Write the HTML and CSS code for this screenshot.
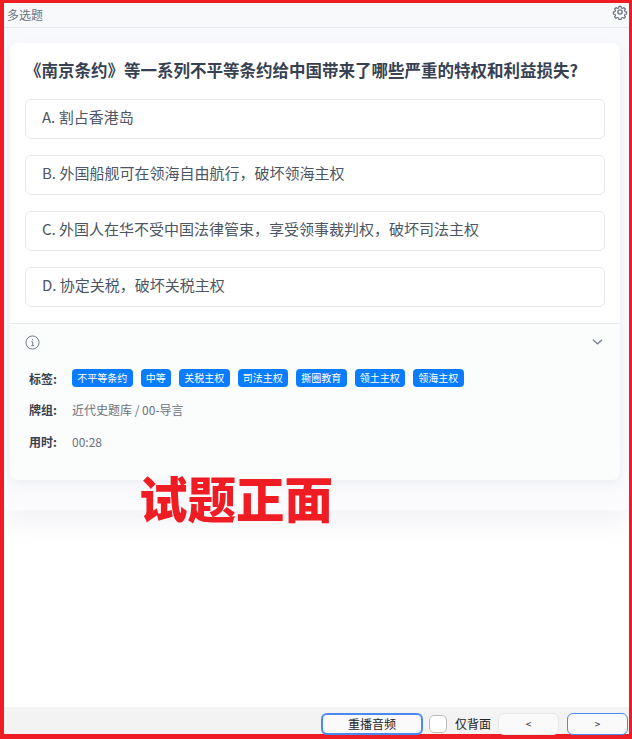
FILE: index.html
```html
<!DOCTYPE html>
<html lang="zh-CN">
<head>
   <meta charset="UTF-8">
   <title>多选题</title>
   <link rel="stylesheet" href="styles.css">
</head>
<body>
   <div class="frame">
      <header class="top-bar">
         <span class="top-title">多选题</span>
         <svg class="gear" viewBox="0 0 24 24" fill="none" stroke="#6b7280" stroke-width="2" stroke-linejoin="round">
            <path d="M10.3 2.6h3.4l.6 2.7 1.9.8 2.4-1.5 2.4 2.4-1.5 2.4.8 1.9 2.7.6v3.4l-2.7.6-.8 1.9 1.5 2.4-2.4 2.4-2.4-1.5-1.9.8-.6 2.7h-3.4l-.6-2.7-1.9-.8-2.4 1.5-2.4-2.4 1.5-2.4-.8-1.9-2.7-.6v-3.4l2.7-.6.8-1.9-1.5-2.4 2.4-2.4 2.4 1.5 1.9-.8z" transform="translate(1.2 1.2) scale(.9)"/>
            <circle cx="12" cy="12" r="3.2"/>
         </svg>
      </header>

      <main class="content">
         <div class="back-card">
            <section class="card">
               <div class="question">
                  <h2>《南京条约》等一系列不平等条约给中国带来了哪些严重的特权和利益损失?</h2>
                  <div class="option">A. 割占香港岛</div>
                  <div class="option">B. 外国船舰可在领海自由航行，破坏领海主权</div>
                  <div class="option">C. 外国人在华不受中国法律管束，享受领事裁判权，破坏司法主权</div>
                  <div class="option">D. 协定关税，破坏关税主权</div>
               </div>
               <div class="info">
                  <div class="info-head">
                     <svg class="info-icon" viewBox="0 0 16 16" fill="none" stroke="#6b7280">
                        <circle cx="8" cy="8" r="7"/>
                        <path d="M6.8 7.2h1.4v4M6.6 11.4h3.2M8 4.4v1.2"/>
                     </svg>
                     <svg class="chevron" viewBox="0 0 12 8" fill="none" stroke="#7b8494" stroke-width="1.5">
                        <path d="M1 1.5l5 4.5 5-4.5"/>
                     </svg>
                  </div>
                  <div class="info-row tags-row">
                     <span class="info-label">标签:</span>
                     <div class="tags">
                        <span class="tag">不平等条约</span>
                        <span class="tag">中等</span>
                        <span class="tag">关税主权</span>
                        <span class="tag">司法主权</span>
                        <span class="tag">撕圈教育</span>
                        <span class="tag">领土主权</span>
                        <span class="tag">领海主权</span>
                     </div>
                  </div>
                  <div class="info-row">
                     <span class="info-label">牌组:</span>
                     <span class="info-value">近代史题库 / 00-导言</span>
                  </div>
                  <div class="info-row">
                     <span class="info-label">用时:</span>
                     <span class="info-value">00:28</span>
                  </div>
               </div>
            </section>
         </div>
         <div class="stamp">试题正面</div>
      </main>

      <footer class="bottom-bar">
         <button class="btn replay">重播音频</button>
         <span class="check"></span>
         <span class="check-label">仅背面</span>
         <button class="btn nav">&lt;</button>
         <button class="btn nav next">&gt;</button>
      </footer>
   </div>
</body>
</html>
```

FILE: styles.css
```css
* {
   box-sizing: border-box;
}
body {
   margin: 0;
   font-family: 'Noto Sans CJK SC', sans-serif;
   background-color: #fff;
}
.frame {
   display: flex;
   flex-direction: column;
   width: 632px;
   height: 739px;
   border-style: solid;
   border-color: #f01c24;
   border-width: 3px 3px 5px 4px;
}
.top-bar {
   display: flex;
   justify-content: space-between;
   height: 25px;
   padding: 2px 1px 0 3px;
   background-color: #f8f9fb;
   border-bottom: 1px solid #e5e7eb;
}
.top-title {
   font-size: 12px;
   line-height: 20px;
   color: #6b7280;
}
.gear {
   width: 16px;
   height: 16px;
   margin-top: -1px;
}
.content {
   position: relative;
   flex: 1;
   overflow: hidden;
   background: linear-gradient(#f9fafc, #fff 40px);
}
.back-card {
   padding: 15px 9px 30px 6px;
   background: linear-gradient(#f8f9fc 420px, #fcfcfe 490px);
   box-shadow: 0 14px 24px rgba(120, 125, 170, 0.09);
}
.card {
   background-color: #fbfcfc;
   border-radius: 8px;
   box-shadow: 0 4px 12px rgba(100, 105, 140, 0.08);
   overflow: hidden;
}
.question {
   padding: 15px 15px 16px;
   background-color: #fff;
   border-bottom: 1px solid #e8eaed;
}
h2 {
   margin: 0 0 16px;
   font-size: 16.5px;
   line-height: 25px;
   font-weight: 700;
   color: #374151;
}
.option {
   height: 40px;
   margin-bottom: 16px;
   padding: 0 16px;
   font-size: 15px;
   line-height: 33px;
   color: #4b5563;
   background-color: #fff;
   border: 1px solid #e5e7eb;
   border-radius: 6px;
}
.option:last-child {
   margin-bottom: 0;
}
.info {
   height: 156px;
   padding: 8px 15px 0 15px;
}
.info-head {
   display: flex;
   justify-content: space-between;
   align-items: center;
   height: 20px;
   margin-bottom: 17px;
}
.info-icon {
   width: 15px;
   height: 15px;
}
.chevron {
   width: 11px;
   height: 8px;
   margin-right: 2px;
}
.info-row {
   display: flex;
   align-items: center;
   height: 18px;
   margin-bottom: 14px;
   padding: 0 0 2px 4px;
   font-size: 12px;
}
.tags-row {
   padding-bottom: 0;
}
.info-label {
   width: 43px;
   font-weight: 700;
   color: #374151;
}
.info-value {
   color: #6b7280;
}
.tags {
   display: flex;
   gap: 8px;
}
.tag {
   height: 18px;
   padding: 0 5.25px;
   font-size: 10px;
   line-height: 18px;
   color: #fff;
   background-color: #0a7cff;
   border-radius: 4px;
}
.stamp {
   position: absolute;
   left: 135px;
   top: 441px;
   font-size: 48.5px;
   line-height: 56px;
   font-weight: 900;
   color: #f01c24;
}
.bottom-bar {
   display: flex;
   align-items: center;
   justify-content: flex-end;
   height: 27px;
   padding: 6px 1px 0 0;
   background-color: #f3f3f3;
}
.btn {
   height: 22px;
   margin: 0;
   padding: 0;
   font-family: inherit;
   font-size: 12px;
   color: #222;
   background-color: #fafafa;
   border: 1px solid #e8e8e8;
   border-radius: 6px;
}
.replay {
   width: 102px;
   border: 2px solid #4a8af0;
}
.check {
   width: 18px;
   height: 18px;
   margin-left: 6px;
   background-color: #fff;
   border: 1px solid #bbb;
   border-radius: 5px;
}
.check-label {
   margin: 0 7px 0 8px;
   font-size: 12px;
   color: #222;
}
.nav {
   width: 61px;
   font-size: 10px;
}
.next {
   margin-left: 8px;
   border-color: #4a8af0;
}
```
